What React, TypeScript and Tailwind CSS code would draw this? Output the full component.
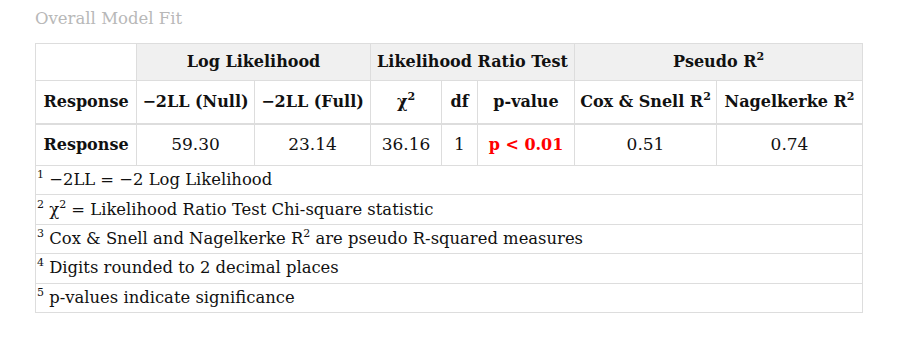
import React from "react";

const F = { fontFamily: '"DejaVu Serif", "Liberation Serif", serif' };

export default function App() {
  const th = "border border-[#dddddd] font-bold text-center align-middle px-1 whitespace-nowrap text-[16px]";
  const td = "border border-[#dddddd] text-center align-middle px-1 whitespace-nowrap text-[17px]";
  const sup = "text-[11px] relative -top-[7px]";
  const foot = [
    <>−2LL = −2 Log Likelihood</>,
    <>χ<sup className={sup}>2</sup> = Likelihood Ratio Test Chi-square statistic</>,
    <>Cox &amp; Snell and Nagelkerke R<sup className={sup}>2</sup> are pseudo R-squared measures</>,
    <>Digits rounded to 2 decimal places</>,
    <>p-values indicate significance</>,
  ];
  return (
    <div className="bg-white w-[899px] h-[342px] pl-[35px] pt-[7px] text-[#111]" style={F}>
      <div className="text-[16.5px] text-[#b8b8b8] h-[36px] leading-[24px]">Overall Model Fit</div>
      <table className="border-collapse table-fixed w-[827px]">
        <colgroup>
          <col className="w-[101px]" />
          <col className="w-[118px]" />
          <col className="w-[116px]" />
          <col className="w-[71px]" />
          <col className="w-[36px]" />
          <col className="w-[97px]" />
          <col className="w-[142px]" />
          <col className="w-[146px]" />
        </colgroup>
        <thead>
          <tr className="h-[37px]">
            <th className={th}></th>
            <th colSpan={2} className={th + " bg-[#f0f0f0]"}>Log Likelihood</th>
            <th colSpan={3} className={th + " bg-[#f0f0f0]"}>Likelihood Ratio Test</th>
            <th colSpan={2} className={th + " bg-[#f0f0f0]"}>
              Pseudo R<sup className={sup}>2</sup>
            </th>
          </tr>
          <tr className="h-[43px] border-b-2 border-[#dddddd]">
            <th className={th}>Response</th>
            <th className={th}>−2LL (Null)</th>
            <th className={th}>−2LL (Full)</th>
            <th className={th}>χ<sup className={sup}>2</sup></th>
            <th className={th}>df</th>
            <th className={th}>p-value</th>
            <th className={th}>Cox &amp; Snell R<sup className={sup}>2</sup></th>
            <th className={th}>Nagelkerke R<sup className={sup}>2</sup></th>
          </tr>
        </thead>
        <tbody>
          <tr className="h-[42px]">
            <td className={td + " font-bold !text-[16px]"}>Response</td>
            <td className={td}>59.30</td>
            <td className={td}>23.14</td>
            <td className={td}>36.16</td>
            <td className={td}>1</td>
            <td className={td + " font-bold text-[#ff0000] !text-[16px]"}>p &lt; 0.01</td>
            <td className={td}>0.51</td>
            <td className={td}>0.74</td>
          </tr>
          {foot.map((f, i) => (
            <tr key={i} className="h-[29.4px]">
              <td colSpan={8} className="border border-[#dddddd] text-left align-middle pl-[1px] whitespace-nowrap text-[16.4px] leading-[20px]">
                <sup className={sup}>{i + 1}</sup> {f}
              </td>
            </tr>
          ))}
        </tbody>
      </table>
    </div>
  );
}
